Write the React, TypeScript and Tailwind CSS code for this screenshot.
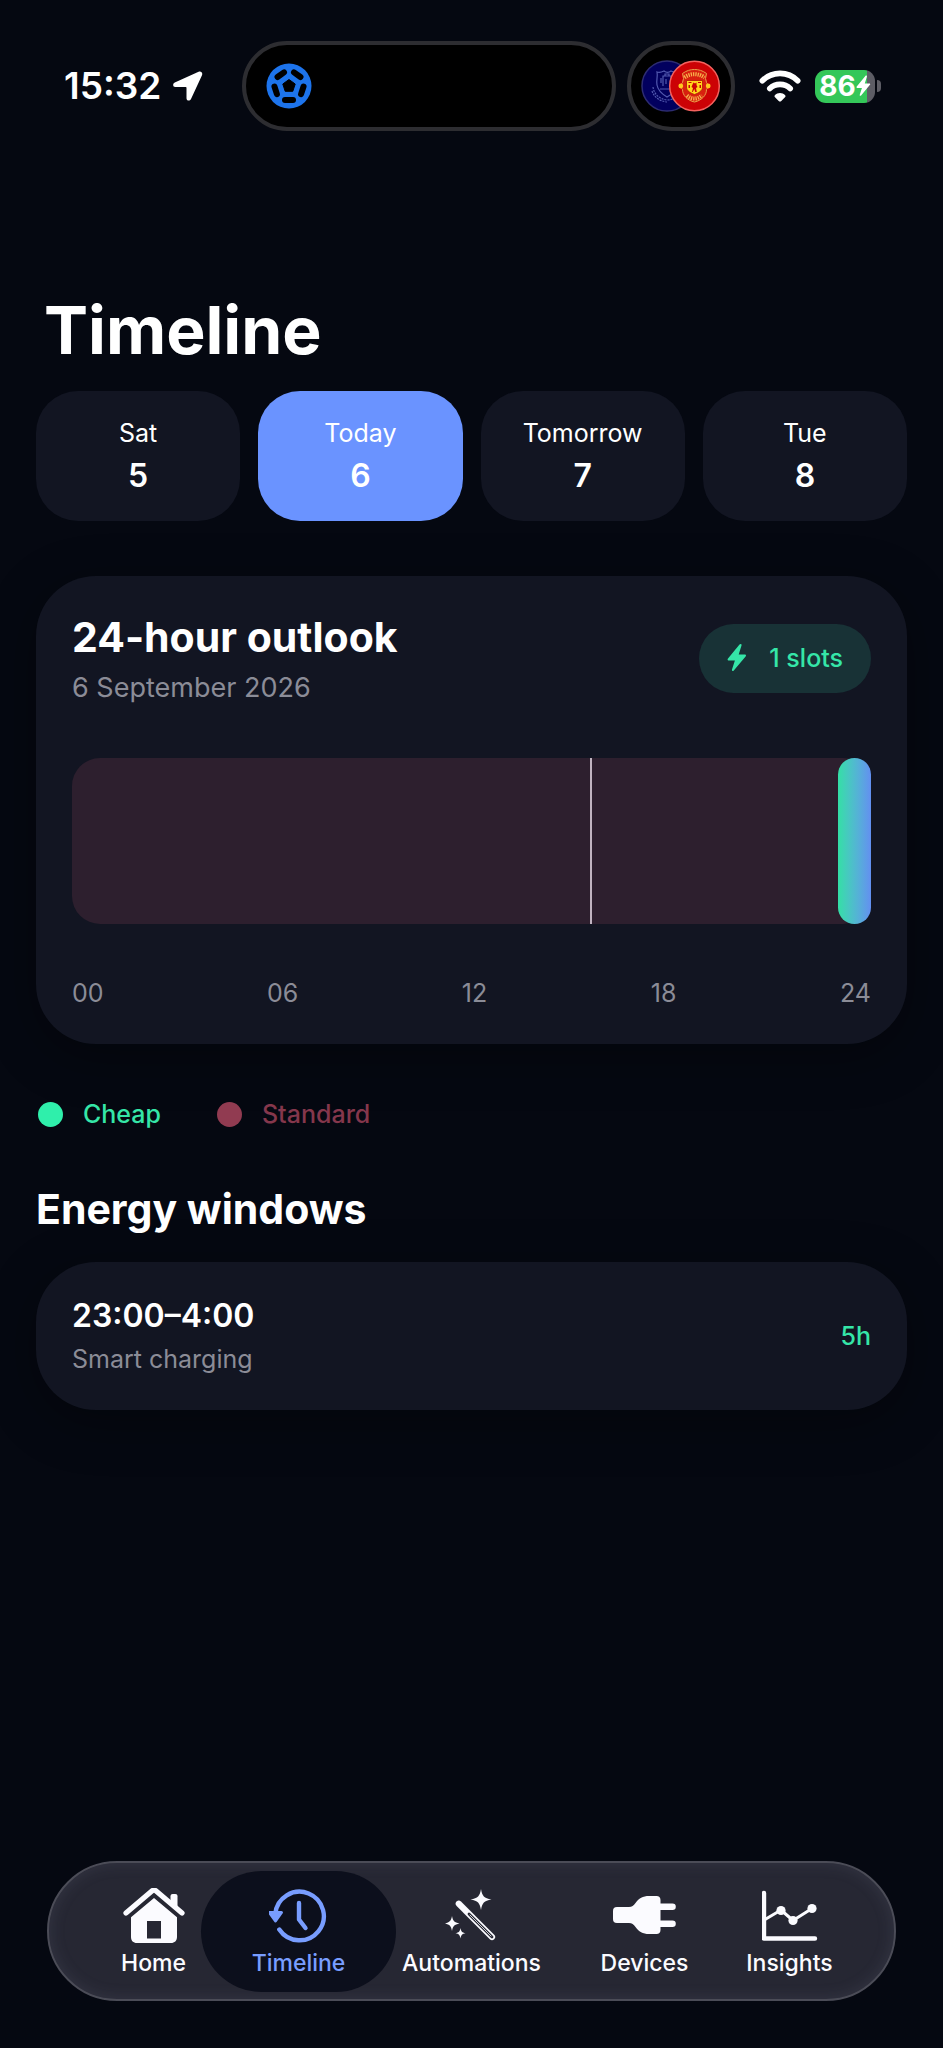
import { useState } from 'react';

const days = [
  { label: 'Sat', date: 5 },
  { label: 'Today', date: 6 },
  { label: 'Tomorrow', date: 7 },
  { label: 'Tue', date: 8 },
];

const hours = ['00', '06', '12', '18', '24'];

const windows = [{ time: '23:00–4:00', name: 'Smart charging', duration: '5h' }];

const BOLT = 'M12.5 0.6 1 14.6c-.8 1-.3 1.9.9 1.9h6L5 25.6c-.4 1.4.8 2 1.8.9L18.6 12.4c.8-1 .3-1.9-.9-1.9h-6l2.8-9C14.9.1 13.5-.5 12.5.6Z';

const LocationArrow = () => (
  <svg width="30" height="30" viewBox="0 0 30 30" fill="#fff">
    <path d="M25.6.7 1.800 11.600C-.6 12.800-.3 16 2.300 16h10.500c.4 0 .7.3.7.7v10.600c0 2.700 3.300 3.100 4.500.7L29 4.200C30 1.900 28-.4 25.600.700Z" />
  </svg>
);

const Football = () => (
  <svg width="46" height="46" viewBox="0 0 46 46">
    <circle cx="23" cy="23" r="22.500" fill="#1d74ec" />
    <path d="M23 16.500l6.200 4.500-2.400 7.300h-7.600L16.800 21Z" fill="#000" stroke="#000" strokeWidth="1" strokeLinejoin="round" />
    {[0, 72, 144, 216, 288].map((angle) => (
      <rect key={angle} x="16" y="34" width="14" height="6" rx="3" fill="#000" transform={`rotate(${angle} 23 23)`} />
    ))}
  </svg>
);

const Crests = () => (
  <svg width="80" height="52" viewBox="0 0 80 52">
    <circle cx="26" cy="26" r="25" fill="#02005e" stroke="#2d2c72" strokeWidth="1.500" />
    <g fill="none" stroke="#5359b0" strokeWidth="1.200">
      <path d="M16 12c3 1 5 0 7-1 2 1.500 5 1.500 7 0 2 1 4 2 7 1-1 5 1 8 0 13-1 6-6 9-11 12-5-3-9-6-10-12-1-5 1-8 0-13Z" />
      <path d="M22 26V16h8v10M24 16v-2h4v2M19 29h14M20 18v5M25 19v5" />
      <path d="M12 27c1 7 6 12 14 13 5 0 9-2 12-5M11 31c2 6 7 10 15 11" strokeDasharray="2 1" />
    </g>
    <circle cx="53.500" cy="26" r="24.800" fill="#cc0205" stroke="#f4625e" strokeWidth="1.500" />
    <path d="M53.500 9.500c4 0 8 1 12 4l-1 5 1 4c2 2 2 5 0 7 0 6-5 11-12 12.500-7-1.500-12-6.500-12-12.500-2-2-2-5 0-7l1-4-1-5c4-3 8-4 12-4Z" fill="#d8200f" stroke="#e9a24a" strokeWidth="1" />
    <path d="M43.500 17.500c6-4.500 14-4.500 20 0M46 35.500c5 4 10 4 15 0" fill="none" stroke="#f8b24c" strokeWidth="4" strokeDasharray="1.300 1" />
    <circle cx="39.800" cy="26" r="2.400" fill="#ffc71f" />
    <circle cx="67.200" cy="26" r="2.400" fill="#ffc71f" />
    <path d="M45.500 20.500h16V27c0 4-4 6-8 7.500-4-1.500-8-3.500-8-7.500Z" fill="#ffd51c" stroke="#b31208" strokeWidth=".8" />
    <path d="M51.500 24.500l1-2 1.500 1 1.500-1v2.500l1 2-1.500 1 .8 4h-1.500l-1-3-1.500 3H51l1-4-1.500-1ZM47.500 22h3v1h-3ZM57 22h3v1h-3ZM47.500 25h1.500v3h-1.500ZM58.500 25h1.500v3h-1.500Z" fill="#cc0205" />
  </svg>
);

const Wifi = () => (
  <svg width="42" height="32" viewBox="0 0 42 32" fill="none" stroke="#fff" strokeWidth="5.600" strokeLinecap="round">
    <path d="M3.300 10.700C13 .9 29 .9 38.700 10.700" />
    <path d="M10.800 18.500c5.600-5.500 14.800-5.500 20.400 0" />
    <path d="M15.800 25.300c2.800-3.200 7.600-3.200 10.400 0 .5.600.5 1.200 0 1.700l-3.900 3.900c-.8.800-1.800.8-2.600 0L15.800 27c-.5-.5-.5-1.100 0-1.700Z" fill="#fff" stroke="none" />
  </svg>
);

const Battery = () => (
  <div className="flex items-center gap-0.5">
    <div className="flex h-[33px] w-[60px] items-center justify-center overflow-hidden rounded-[11px] bg-linear-to-r from-[#34c759] from-86% to-[#5d5d65] to-86%">
      <span className="text-[28px] leading-8 font-bold">86</span>
      <svg width="15" height="22" viewBox="0 0 20 28" fill="#fff">
        <path d={BOLT} />
      </svg>
    </div>
    <div className="h-3 w-1 rounded-r-full bg-[#5d5d65]" />
  </div>
);

const HomeIcon = () => (
  <svg width="62" height="56" viewBox="0 0 62 56" fill="currentColor">
    <path d="M47.500 17V8.200c0-1.400.9-2.200 2.200-2.200h2.600c1.400 0 2.200.8 2.200 2.200V23" />
    <path d="M3 25 28.600 3.200c1.500-1.300 3.300-1.300 4.800 0L59 25" fill="none" stroke="currentColor" strokeWidth="5.200" strokeLinecap="round" />
    <path d="M31 10 54 29.300V49c0 3.800-2.400 6-6 6H14c-3.800 0-6-2.200-6-6V29.300ZM24 33v17.500h14V33Z" fillRule="evenodd" />
  </svg>
);

const TimelineIcon = () => (
  <svg width="60" height="56" viewBox="2 0 60 56" fill="none" stroke="currentColor" strokeWidth="4.400" strokeLinecap="round" strokeLinejoin="round">
    <path d="M8.300 26a24.300 24.300 0 1 1 4 15.500" />
    <path d="M2.500 24.500h12L8.500 33Z" fill="currentColor" strokeWidth="3" />
    <path d="M32 15v16.500l6.500 8.500" />
  </svg>
);

const WandIcon = () => (
  <svg width="54" height="56" viewBox="2 0 54 56" fill="currentColor">
    <path d="M15.800 15.800 49 49" fill="none" stroke="currentColor" strokeWidth="6.200" strokeLinecap="round" />
    <path d="M26 26 49 49" fill="none" stroke="#262733" strokeWidth="2.800" strokeLinecap="round" />
    <path d="M27 27 48 48" fill="none" stroke="currentColor" strokeWidth=".8" strokeLinecap="round" />
    <path d="M38 1c1.200 7 3 9.200 10.500 10.500C41 12.800 39.200 15 38 22c-1.200-7-3-9.200-10.500-10.500C35 10.200 36.800 8 38 1Z" />
    <path d="M9 28c1 5 2.200 6.400 7.500 7.500C11.200 36.600 10 38 9 43c-1-5-2.200-6.400-7.500-7.500C6.800 34.400 8 33 9 28Z" />
    <path d="M17.500 40c.7 3.500 1.500 4.500 5 5.200-3.500.7-4.300 1.700-5 5.200-.7-3.500-1.500-4.500-5-5.200 3.500-.7 4.300-1.700 5-5.200Z" />
  </svg>
);

const PlugIcon = () => (
  <svg width="64" height="56" viewBox="1 0 64 56" fill="currentColor">
    <path d="M5 19h12c3 0 4.500-1.200 6.500-4C26.500 10.500 31 8 37 8h7.500C47 8 48.500 9.500 48.500 12v3.500h12a3.300 3.300 0 0 1 0 6.600h-12v10.300h12a3.300 3.300 0 0 1 0 6.600h-12v3c0 2.500-1.500 4-4 4H37c-6 0-10.500-2.500-13.500-7-2-2.800-3.500-4-6.500-4H5c-2.800 0-4-1.500-4-4v-8c0-2.500 1.200-4 4-4Z" />
  </svg>
);

const ChartIcon = () => (
  <svg width="56" height="56" viewBox="1 0 56 56" fill="none" stroke="currentColor" strokeWidth="4.400" strokeLinecap="round" strokeLinejoin="round">
    <path d="M3 5v45.500h51" />
    <path d="M4 31.500 20 22l12 10.500 19-12" strokeWidth="3" />
    <g fill="currentColor" stroke="none">
      <circle cx="20" cy="22.500" r="4.600" />
      <circle cx="32" cy="32.500" r="4.600" />
      <circle cx="51" cy="20.500" r="4.600" />
    </g>
  </svg>
);

const tabs = [
  { name: 'Home', Icon: HomeIcon },
  { name: 'Timeline', Icon: TimelineIcon },
  { name: 'Automations', Icon: WandIcon },
  { name: 'Devices', Icon: PlugIcon },
  { name: 'Insights', Icon: ChartIcon },
];

const StatusBar = () => (
  <header className="flex items-center pt-[41px] pr-[62px] pl-16">
    <div className="flex items-center gap-3">
      <span className="text-[37px] leading-10 font-semibold">15:32</span>
      <LocationArrow />
    </div>
    <div className="ml-auto flex items-center gap-[11px]">
      <div className="flex h-[90px] w-[374px] items-center rounded-full border-4 border-[#2d2d31] bg-black pl-5">
        <Football />
      </div>
      <div className="flex h-[90px] w-[108px] items-center justify-center rounded-full border-4 border-[#2d2d31] bg-black">
        <Crests />
      </div>
    </div>
    <div className="ml-6 flex items-center gap-[14px]">
      <Wifi />
      <Battery />
    </div>
  </header>
);

const App = () => {
  const [selectedDay, setSelectedDay] = useState(6);
  const [activeTab, setActiveTab] = useState('Timeline');

  return (
    <div className="flex min-h-screen flex-col bg-[#050811] font-['Inter','Liberation_Sans',sans-serif] text-white">
      <StatusBar />

      <main className="px-9 pt-[159px]">
        <h1 className="pl-2 text-[66px] leading-20 font-bold">Timeline</h1>

        <div className="mt-[21px] grid grid-cols-4 gap-[18px]">
          {days.map((day) => (
            <button
              key={day.date}
              onClick={() => setSelectedDay(day.date)}
              className={`flex flex-col items-center gap-2.5 rounded-[42px] py-[27px] ${selectedDay === day.date ? 'bg-[#6a93ff]' : 'bg-[#121522]'}`}
            >
              <span className="text-[25px] leading-[30px]">{day.label}</span>
              <span className="text-[32px] leading-9 font-semibold">{day.date}</span>
            </button>
          ))}
        </div>

        <section className="mt-[55px] rounded-[60px] bg-[#121522] p-9 shadow-[0_12px_50px_rgba(0,0,0,0.35)]">
          <div className="flex items-center justify-between">
            <div>
              <h2 className="text-[41px] leading-[50px] font-bold">24-hour outlook</h2>
              <p className="mt-2.5 text-[27px] leading-8 text-[#8b8c97]">6 September 2026</p>
            </div>
            <div className="flex h-[69px] items-center gap-[22px] rounded-full bg-[#183236] px-7 text-[#35e6a8]">
              <svg width="20" height="28" viewBox="0 0 20 28" fill="currentColor">
                <path d={BOLT} />
              </svg>
              <span className="text-[25px] leading-[30px] font-medium">1 slots</span>
            </div>
          </div>

          <div className="relative mt-[54px] h-[166px] rounded-[28px] bg-[#2d1f2e]">
            <div className="absolute inset-y-0 left-[64.8%] w-0.5 bg-[#c0b3c0]" />
            <div className="absolute inset-y-0 right-0 w-[33px] rounded-full bg-linear-to-r from-[#33dfa5] to-[#638ff0]" />
          </div>

          <div className="mt-[54px] flex justify-between text-[25px] leading-[30px] text-[#8b8c97]">
            {hours.map((hour) => (
              <span key={hour}>{hour}</span>
            ))}
          </div>
        </section>

        <div className="mt-[55px] flex gap-14 pl-0.5 text-[25px] leading-[30px] font-medium">
          <div className="flex items-center gap-5 text-[#35e6a8]">
            <span className="size-[25px] rounded-full bg-[#2fefab]" />
            Cheap
          </div>
          <div className="flex items-center gap-5 text-[#85374c]">
            <span className="size-[25px] rounded-full bg-[#913b51]" />
            Standard
          </div>
        </div>

        <h2 className="mt-[55px] text-[41px] leading-[50px] font-bold">Energy windows</h2>

        {windows.map((item) => (
          <section key={item.time} className="mt-7 flex items-center justify-between rounded-[60px] bg-[#121522] p-9 shadow-[0_12px_50px_rgba(0,0,0,0.35)]">
            <div>
              <p className="text-[32px] leading-9 font-semibold">{item.time}</p>
              <p className="mt-2.5 text-[25px] leading-[30px] text-[#8b8c97]">{item.name}</p>
            </div>
            <span className="text-[25px] leading-[30px] font-medium text-[#35e6a8]">{item.duration}</span>
          </section>
        ))}
      </main>

      <nav className="mx-[47px] mt-auto mb-[47px] grid grid-cols-[145fr_145fr_201fr_145fr_145fr] rounded-full border-2 border-[#4b4c57] bg-[#262733] px-8 pt-[25px] pb-[22px] shadow-[inset_0_0_16px_rgba(120,125,150,0.18)]">
        {tabs.map(({ name, Icon }) => (
          <button key={name} onClick={() => setActiveTab(name)} className={`relative flex flex-col items-center gap-[5px] ${activeTab === name ? 'text-[#789dff]' : 'text-[#fbfbff]'}`}>
            {activeTab === name && <span className="absolute -inset-x-[25px] -top-[17px] -bottom-[15px] rounded-full bg-[#0c0f1c]" />}
            <span className="relative">
              <Icon />
            </span>
            <span className="relative text-[23px] leading-7 font-medium">{name}</span>
          </button>
        ))}
      </nav>
    </div>
  );
};

export default App;
